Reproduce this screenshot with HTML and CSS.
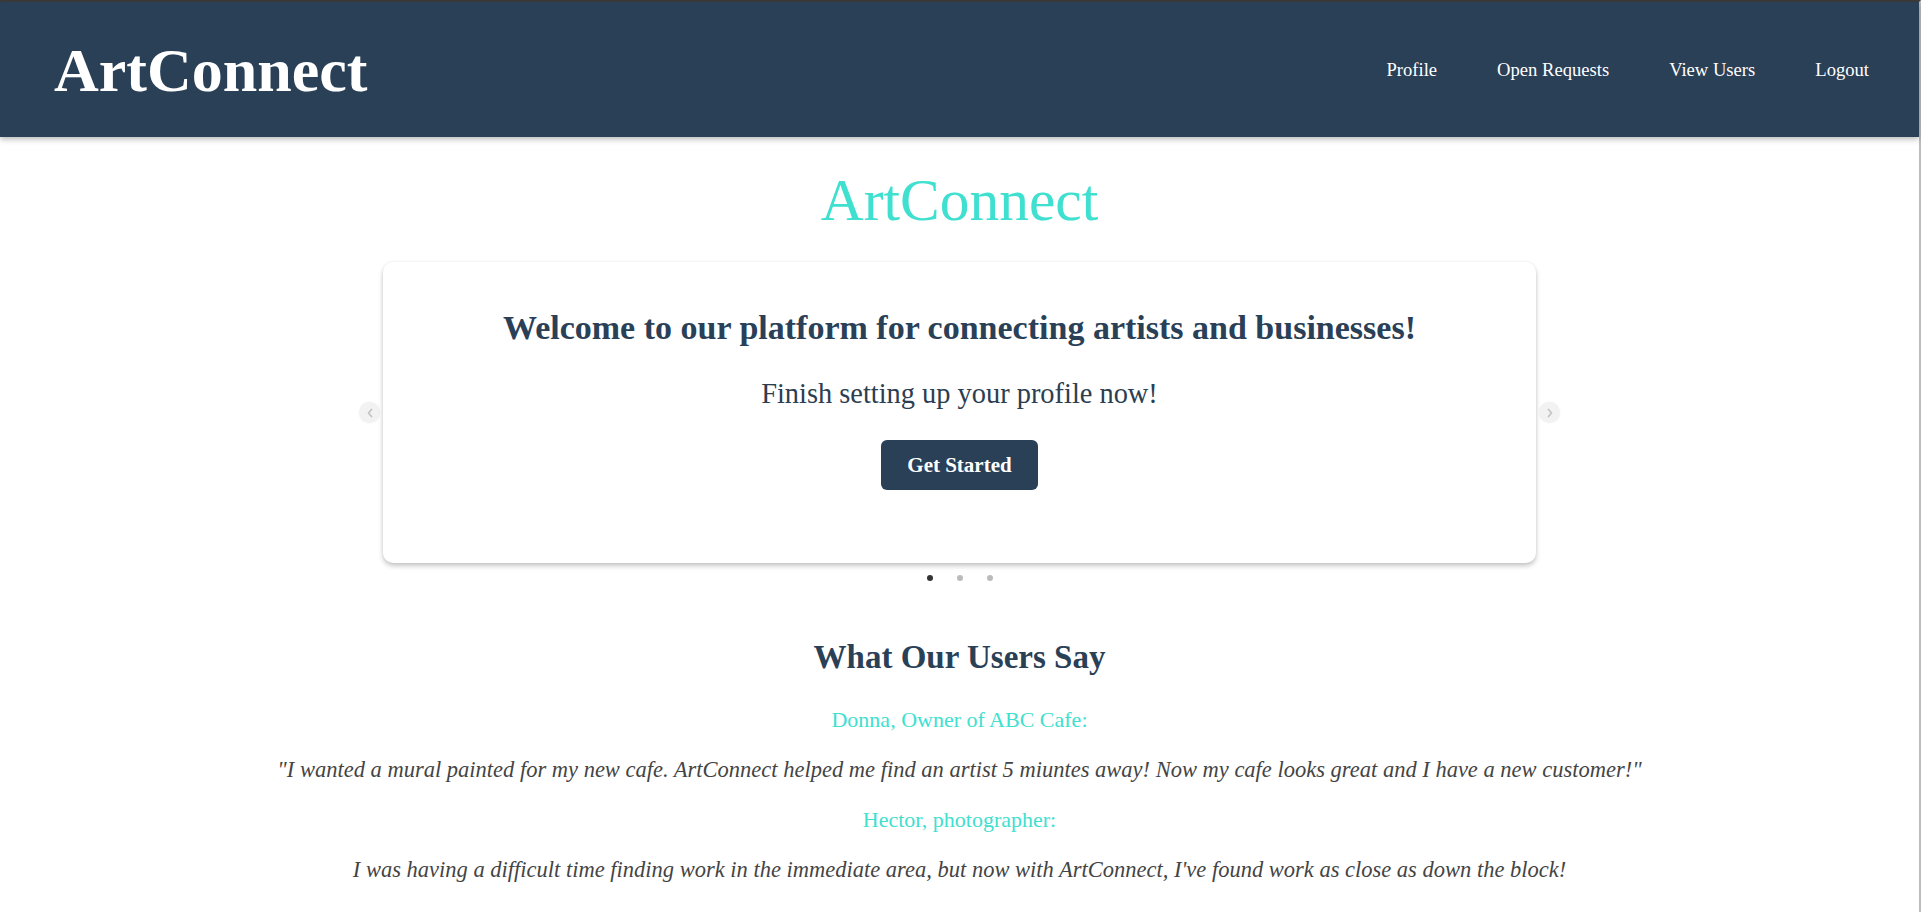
FILE: index.html
```html
<!DOCTYPE html>
<html lang="en">
<head>
<meta charset="utf-8">
<title>ArtConnect</title>
<link rel="stylesheet" href="styles.css">
</head>
<body>
<div class="window">
  <header class="navbar">
    <div class="logo">ArtConnect</div>
    <nav class="nav-links">
      <a href="#">Profile</a>
      <a href="#">Open Requests</a>
      <a href="#">View Users</a>
      <a href="#">Logout</a>
    </nav>
  </header>
  <main class="main">
    <h1 class="hero-title">ArtConnect</h1>
    <div class="carousel">
      <button class="arrow" aria-label="Previous">
        <svg width="8" height="10" viewBox="0 0 8 10"><path d="M5.5 1.5 L2.5 5 L5.5 8.5" fill="none" stroke="#c4c4c4" stroke-width="1.8" stroke-linecap="round" stroke-linejoin="round"/></svg>
      </button>
      <div class="card">
        <h2 class="card-title">Welcome to our platform for connecting artists and businesses!</h2>
        <p class="card-text">Finish setting up your profile now!</p>
        <a class="btn" href="#">Get Started</a>
      </div>
      <button class="arrow" aria-label="Next">
        <svg width="8" height="10" viewBox="0 0 8 10"><path d="M2.5 1.5 L5.5 5 L2.5 8.5" fill="none" stroke="#c4c4c4" stroke-width="1.8" stroke-linecap="round" stroke-linejoin="round"/></svg>
      </button>
    </div>
    <div class="dots">
      <span class="dot active"></span>
      <span class="dot"></span>
      <span class="dot"></span>
    </div>
    <section class="testimonials">
      <h2 class="section-title">What Our Users Say</h2>
      <p class="author">Donna, Owner of ABC Cafe:</p>
      <p class="quote">"I wanted a mural painted for my new cafe. ArtConnect helped me find an artist 5 miuntes away! Now my cafe looks great and I have a new customer!"</p>
      <p class="author">Hector, photographer:</p>
      <p class="quote">I was having a difficult time finding work in the immediate area, but now with ArtConnect, I've found work as close as down the block!</p>
    </section>
  </main>
</div>
</body>
</html>
```

FILE: styles.css
```css
* {
  box-sizing: border-box;
}

html, body {
  margin: 0;
  padding: 0;
  background: #ffffff;
}

body {
  font-family: "Liberation Serif", "Times New Roman", serif;
  color: #2a4057;
  overflow: hidden;
}

.window {
  border-top: 2px solid #3c3c3c;
  border-right: 2px solid #bdbdbd;
  height: 912px;
}

.navbar {
  height: 135px;
  background: #2a4057;
  display: flex;
  align-items: center;
  justify-content: space-between;
  padding: 0 50px 0 54px;
  box-shadow: 0 2px 6px rgba(0, 0, 0, 0.3);
  position: relative;
  z-index: 1;
}

.logo {
  font-size: 62px;
  font-weight: bold;
  line-height: 70px;
  color: #ffffff;
  padding-top: 1px;
}

.nav-links {
  display: flex;
  gap: 60px;
}

.nav-links a {
  color: #ffffff;
  text-decoration: none;
  font-size: 18.6px;
  line-height: 22px;
}

.main {
  text-align: center;
}

.hero-title {
  margin: 30px 0 29px;
  font-size: 59.5px;
  line-height: 66px;
  font-weight: normal;
  color: #40e0d0;
}

.carousel {
  display: flex;
  align-items: center;
  justify-content: center;
  gap: 3px;
}

.arrow {
  width: 21px;
  height: 21px;
  border-radius: 50%;
  border: none;
  padding: 0;
  background: #f2f2f2;
  box-shadow: 0 0 2px rgba(0, 0, 0, 0.06);
  display: flex;
  align-items: center;
  justify-content: center;
}

.card {
  width: 1153px;
  background: #ffffff;
  border-radius: 10px;
  box-shadow: 0 3px 5px rgba(0, 0, 0, 0.22), 0 0 3px rgba(0, 0, 0, 0.06);
  padding: 46px 20px 73px;
  display: flex;
  flex-direction: column;
  align-items: center;
}

.card-title {
  margin: 0;
  font-size: 34px;
  line-height: 40px;
  font-weight: bold;
  color: #2a4057;
}

.card-text {
  margin: 29px 0;
  font-size: 28.4px;
  line-height: 34px;
  color: #2c3e50;
}

.btn {
  display: inline-flex;
  align-items: center;
  height: 50px;
  padding: 0 26px;
  background: #2a4057;
  color: #ffffff;
  border-radius: 6px;
  text-decoration: none;
  font-size: 21px;
  font-weight: bold;
}

.dots {
  display: flex;
  justify-content: center;
  gap: 24px;
  margin-top: 12px;
}

.dot {
  width: 6px;
  height: 6px;
  border-radius: 50%;
  background: #bbbbbb;
}

.dot.active {
  background: #333333;
}

.testimonials {
  margin-top: 56px;
}

.section-title {
  margin: 0 0 28px;
  font-size: 33px;
  line-height: 40px;
  font-weight: bold;
  color: #2a4057;
}

.author {
  margin: 20px 0;
  font-size: 22px;
  line-height: 30px;
  color: #40e0d0;
}

.quote {
  margin: 20px 0;
  font-size: 22.5px;
  line-height: 30px;
  font-style: italic;
  color: #444444;
}

.testimonials .author:first-of-type {
  margin-top: 0;
}
```
